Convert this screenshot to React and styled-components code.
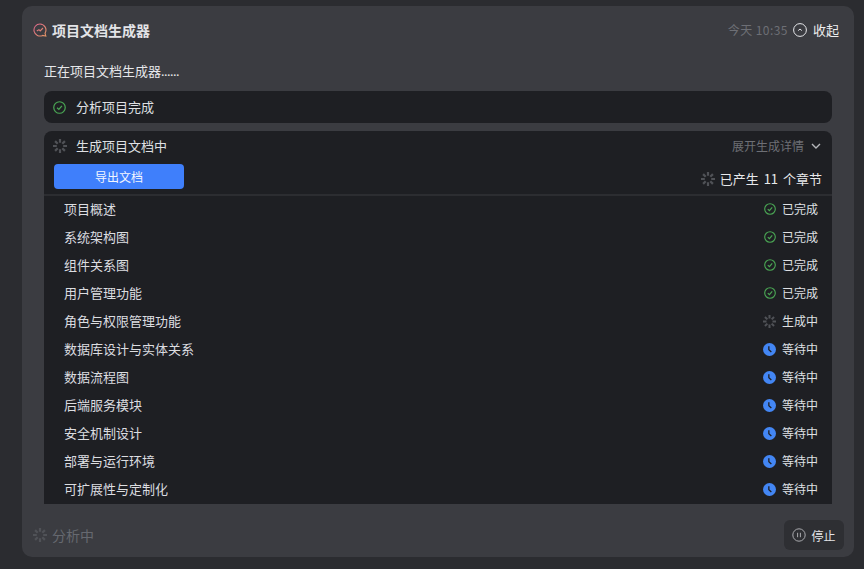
import React from "react";
import styled, { createGlobalStyle } from "styled-components";

const GlobalStyle = createGlobalStyle`
  html, body {
    margin: 0;
    padding: 0;
    height: 100%;
    background-color: #2b2c30;
  }
  body {
    font-family: "Noto Sans CJK SC", "Noto Sans", sans-serif;
    line-height: 18px;
    color: #e6e7ea;
    overflow: hidden;
  }
`;

const Page = styled.div`
  height: 569px;
  box-sizing: border-box;
  padding: 6px 10px 12px 22px;
`;

const Panel = styled.div`
  height: 100%;
  display: flex;
  flex-direction: column;
  background-color: #3b3c41;
  border-radius: 10px;
  overflow: hidden;
`;

const Header = styled.div`
  height: 48px;
  flex-shrink: 0;
  display: flex;
  align-items: center;
  justify-content: space-between;
  padding: 0 15px 0 11px;
`;

const HeaderTitle = styled.div`
  display: flex;
  align-items: center;
  gap: 5px;
  font-size: 14px;
  font-weight: 700;
  color: #e3e4e7;
`;

const HeaderRight = styled.div`
  display: flex;
  align-items: center;
  gap: 5px;
`;

const Time = styled.span`
  font-size: 12px;
  letter-spacing: 0.45px;
  color: #6d6f75;
`;

const Collapse = styled.span`
  font-size: 13px;
  color: #eceded;
  margin-left: 1px;
`;

const Body = styled.div`
  flex: 1;
  min-height: 0;
  display: flex;
  flex-direction: column;
  gap: 8px;
  padding: 0 22px;
`;

const Message = styled.div`
  height: 29px;
  flex-shrink: 0;
  font-size: 13px;
  line-height: 34px;
  color: #e6e7ea;
`;

const Dots = styled.span`
  font-family: "Noto Sans", sans-serif;
  letter-spacing: -0.5px;
`;

const StepBox = styled.div`
  height: 32px;
  flex-shrink: 0;
  box-sizing: border-box;
  display: flex;
  align-items: center;
  gap: 10px;
  padding: 0 9px;
  font-size: 13px;
  color: #dfe0e3;
  background-color: #1e1f23;
  border-radius: 8px;
`;

const DetailBox = styled.div`
  flex: 1;
  min-height: 0;
  display: flex;
  flex-direction: column;
  background-color: #1e1f23;
  border-radius: 8px 8px 0 0;
  overflow: hidden;
`;

const DetailHead = styled.div`
  height: 31px;
  box-sizing: border-box;
  flex-shrink: 0;
  display: flex;
  align-items: center;
  justify-content: space-between;
  padding: 0 11px 1px 9px;
`;

const DetailTitle = styled.div`
  display: flex;
  align-items: center;
  gap: 9px;
  font-size: 13px;
  color: #dfe0e3;
`;

const Expand = styled.div`
  display: flex;
  align-items: center;
  gap: 7px;
  font-size: 12px;
  color: #6d6f75;
`;

const Toolbar = styled.div`
  flex-shrink: 0;
  display: flex;
  align-items: flex-start;
  justify-content: space-between;
  padding: 2px 10px 0;
  border-bottom: 2px solid #2c2d31;
`;

const ExportButton = styled.button`
  width: 130px;
  height: 25px;
  border: none;
  border-radius: 4px;
  background-color: #3f7ffb;
  color: #f2f6ff;
  font-family: inherit;
  font-size: 12px;
`;

const Count = styled.div`
  display: flex;
  align-items: center;
  gap: 5px;
  height: 30px;
  font-size: 13px;
  word-spacing: 2px;
  color: #e8e9eb;
`;

const Chapters = styled.div`
  flex: 1;
  min-height: 0;
  overflow: hidden;
`;

const Chapter = styled.div`
  height: 28px;
  box-sizing: border-box;
  display: flex;
  align-items: center;
  justify-content: space-between;
  padding: 0 14px 2px 20px;
  font-size: 13px;
  color: #dcdde0;
`;

const Status = styled.div`
  display: flex;
  align-items: center;
  gap: 6px;
  font-size: 12px;
  color: #dfe0e3;
`;

const Footer = styled.div`
  height: 53px;
  box-sizing: border-box;
  flex-shrink: 0;
  display: flex;
  align-items: center;
  justify-content: space-between;
  padding: 16px 10px 7px 11px;
`;

const Working = styled.div`
  display: flex;
  align-items: center;
  gap: 5px;
  font-size: 14px;
  color: #666970;
`;

const StopButton = styled.button`
  width: 60px;
  height: 30px;
  display: flex;
  align-items: center;
  justify-content: center;
  gap: 5px;
  padding: 0;
  border: none;
  border-radius: 6px;
  background-color: #2e2f33;
  color: #e3e4e7;
  font-family: inherit;
  font-size: 12px;
`;

const Spinner = ({ size = 14 }) => (
  <svg width={size} height={size} viewBox="0 0 14 14" fill="none" stroke="#505257" strokeWidth="2.2" strokeLinecap="butt">
    <path d="M7 0V3.8" />
    <path d="M7 10.2V14" />
    <path d="M0 7H3.8" />
    <path d="M10.2 7H14" />
    <path d="M2.1 2.1L4.7 4.7" />
    <path d="M9.3 9.3L11.9 11.9" />
    <path d="M2.1 11.9L4.7 9.3" />
    <path d="M9.3 4.7L11.9 2.1" />
  </svg>
);

const CheckIcon = ({ size = 13 }) => (
  <svg width={size} height={size} viewBox="0 0 14 14" fill="none" stroke="#4aa654" strokeWidth="1.3">
    <circle cx="7" cy="7" r="6.2" />
    <path d="M4.4 7.2L6.3 9L9.6 5.2" strokeWidth="1.4" />
  </svg>
);

const ClockIcon = () => (
  <svg width="13" height="13" viewBox="0 0 14 14" fill="none">
    <circle cx="7" cy="7" r="7" fill="#4386f4" />
    <path d="M6.3 3.4V7.2L9 9.6" stroke="#1e1f23" strokeWidth="1.4" />
  </svg>
);

const TitleIcon = () => (
  <svg width="14" height="14" viewBox="0 0 14 14" fill="none" strokeWidth="1.1">
    <defs>
      <linearGradient id="titleGrad" x1="0" y1="0" x2="14" y2="14" gradientUnits="userSpaceOnUse">
        <stop offset="0" stopColor="#d9608f" />
        <stop offset="1" stopColor="#e39a62" />
      </linearGradient>
    </defs>
    <path d="M7 1A6 6 0 1 0 9.6 12.4L12.8 13L12 10.2A6 6 0 0 0 7 1Z" stroke="url(#titleGrad)" />
    <path d="M3.8 8L6 6.6L7.2 8L10 5" stroke="url(#titleGrad)" />
  </svg>
);

const CollapseIcon = () => (
  <svg width="14" height="14" viewBox="0 0 14 14" fill="none" stroke="#e6e7ea" strokeWidth="1">
    <circle cx="7" cy="7" r="6.4" />
    <path d="M5.2 7.6L7 6L8.8 7.6" />
  </svg>
);

const ChevronIcon = () => (
  <svg width="10" height="6" viewBox="0 0 10 6" fill="none" stroke="#b5b6ba" strokeWidth="1.4">
    <path d="M1 1L5 5L9 1" />
  </svg>
);

const PauseIcon = () => (
  <svg width="14" height="14" viewBox="0 0 14 14" fill="none" stroke="#a9aaae" strokeWidth="1">
    <circle cx="7" cy="7" r="6.2" />
    <path d="M5.6 4.8V9.2" />
    <path d="M8.4 4.8V9.2" />
  </svg>
);

const STATUS = {
  done: { icon: <CheckIcon size={12} />, label: "已完成" },
  running: { icon: <Spinner size={13} />, label: "生成中" },
  waiting: { icon: <ClockIcon />, label: "等待中" },
};

const chapters = [
  { name: "项目概述", status: "done" },
  { name: "系统架构图", status: "done" },
  { name: "组件关系图", status: "done" },
  { name: "用户管理功能", status: "done" },
  { name: "角色与权限管理功能", status: "running" },
  { name: "数据库设计与实体关系", status: "waiting" },
  { name: "数据流程图", status: "waiting" },
  { name: "后端服务模块", status: "waiting" },
  { name: "安全机制设计", status: "waiting" },
  { name: "部署与运行环境", status: "waiting" },
  { name: "可扩展性与定制化", status: "waiting" },
];

const App = () => {
  return (
    <Page>
      <GlobalStyle />
      <Panel>
        <Header>
          <HeaderTitle>
            <TitleIcon />
            项目文档生成器
          </HeaderTitle>
          <HeaderRight>
            <Time>今天 10:35</Time>
            <CollapseIcon />
            <Collapse>收起</Collapse>
          </HeaderRight>
        </Header>
        <Body>
          <Message>
            正在项目文档生成器<Dots>......</Dots>
          </Message>
          <StepBox>
            <CheckIcon />
            分析项目完成
          </StepBox>
          <DetailBox>
            <DetailHead>
              <DetailTitle>
                <Spinner />
                生成项目文档中
              </DetailTitle>
              <Expand>
                展开生成详情
                <ChevronIcon />
              </Expand>
            </DetailHead>
            <Toolbar>
              <ExportButton>导出文档</ExportButton>
              <Count>
                <Spinner />
                已产生 11 个章节
              </Count>
            </Toolbar>
            <Chapters>
              {chapters.map((item) => (
                <Chapter key={item.name}>
                  {item.name}
                  <Status>
                    {STATUS[item.status].icon}
                    {STATUS[item.status].label}
                  </Status>
                </Chapter>
              ))}
            </Chapters>
          </DetailBox>
        </Body>
        <Footer>
          <Working>
            <Spinner />
            分析中
          </Working>
          <StopButton>
            <PauseIcon />
            停止
          </StopButton>
        </Footer>
      </Panel>
    </Page>
  );
};

export default App;
